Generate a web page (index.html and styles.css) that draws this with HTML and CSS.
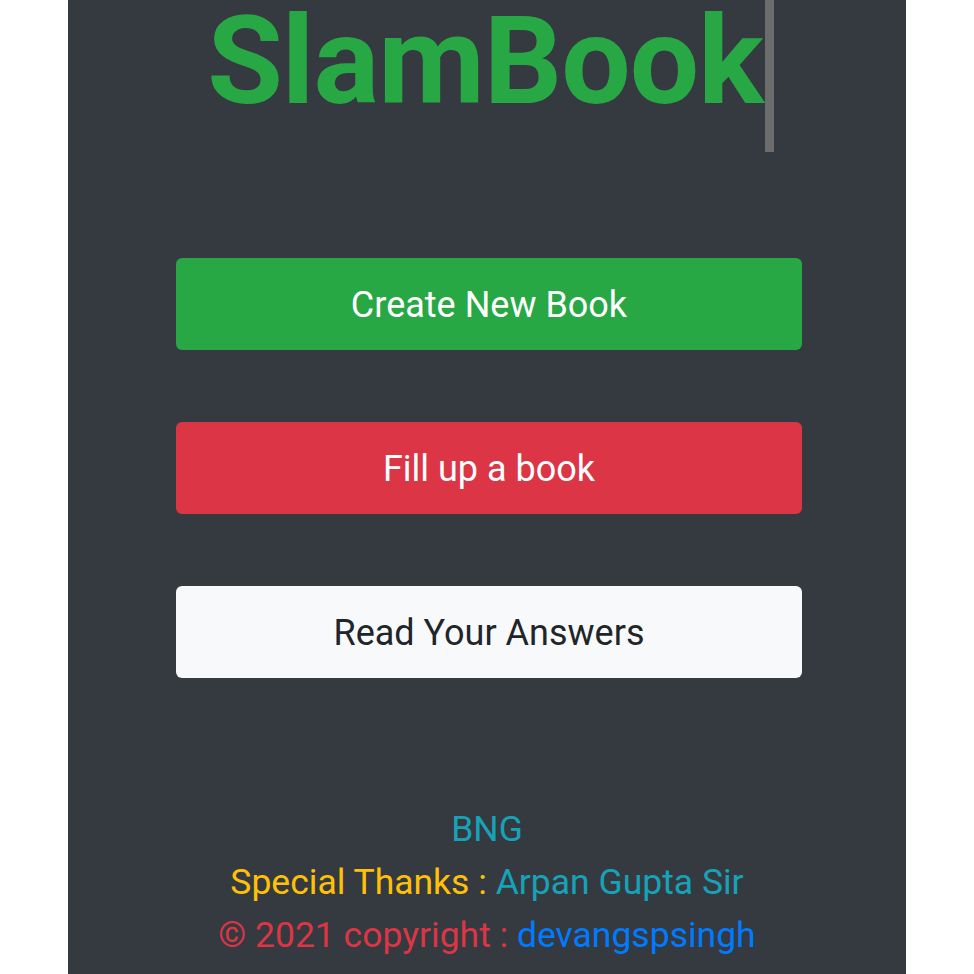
FILE: index.html
```html
<!DOCTYPE html>
<html lang="en">
<head>
<meta charset="utf-8">
<title>SlamBook</title>
<link rel="stylesheet" href="styles.css">
</head>
<body>
<div class="page">
  <h1 class="title"><span class="title-text">SlamBook</span><span class="cursor"></span></h1>
  <div class="actions">
    <a class="btn btn-success" href="#">Create New Book</a>
    <a class="btn btn-danger" href="#">Fill up a book</a>
    <a class="btn btn-light" href="#">Read Your Answers</a>
  </div>
  <footer class="footer">
    <div class="info">BNG</div>
    <div><span class="warning">Special Thanks : </span><span class="info">Arpan Gupta Sir</span></div>
    <div><span class="danger">© 2021 copyright : </span><span class="primary">devangspsingh</span></div>
  </footer>
</div>
</body>
</html>
```
FILE: styles.css
```css
html, body {
  margin: 0;
  padding: 0;
  background: #ffffff;
}
body {
  font-family: Roboto, "Noto Sans", sans-serif;
}
.page {
  width: 838px;
  height: 974px;
  margin: 0 auto;
  background: #343a40;
  overflow: hidden;
  display: flex;
  flex-direction: column;
}
.title {
  margin: 0;
  padding-left: 7px;
  text-align: center;
  font-size: 123px;
  font-weight: 700;
  line-height: 1;
  color: #28a745;
  letter-spacing: -1px;
}
.cursor {
  display: inline-block;
  width: 9px;
  height: 152px;
  margin-left: 2px;
  background: #6c6c6c;
  vertical-align: top;
}
.actions {
  display: flex;
  flex-direction: column;
  gap: 72px;
  padding: 106px 104px 0 108px;
}
.btn {
  display: flex;
  align-items: center;
  justify-content: center;
  height: 92px;
  padding-top: 2px;
  box-sizing: border-box;
  border-radius: 6px;
  font-size: 36px;
  text-decoration: none;
  color: #ffffff;
}
.btn-success { background: #28a745; }
.btn-danger { background: #dc3545; }
.btn-light { background: #f8f9fa; color: #212529; }
.footer {
  margin-top: 125px;
  text-align: center;
  font-size: 35.5px;
  line-height: 53px;
}
.info { color: #17a2b8; }
.warning { color: #ffc107; }
.danger { color: #dc3545; }
.primary { color: #007bff; }
```
